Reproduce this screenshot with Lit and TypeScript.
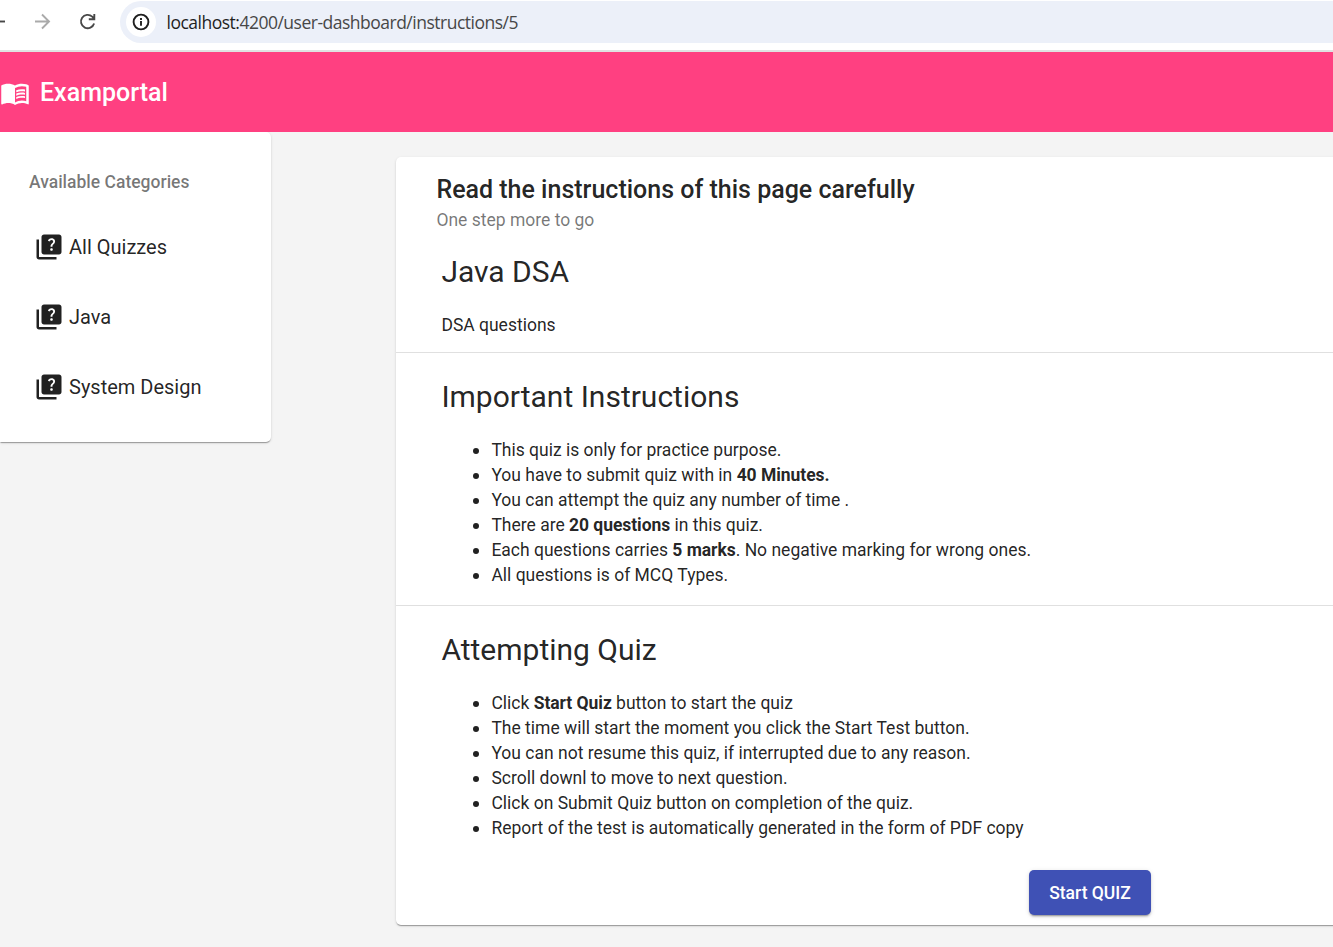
import { LitElement, html, css } from "lit";
import { customElement } from "lit/decorators.js";

const quizIcon = html`<svg class="quiz-icon" viewBox="0 0 24 24" fill="currentColor">
  <path d="M4 6H2v14c0 1.100.9 2 2 2h14v-2H4V6z"></path>
  <path fill-rule="evenodd" d="M20 2H8c-1.100 0-2 .9-2 2v12c0 1.100.9 2 2 2h12c1.100 0 2-.9 2-2V4c0-1.100-.9-2-2-2zm-5.990 13c-.59 0-1.050-.47-1.050-1.050 0-.59.470-1.040 1.050-1.040.59 0 1.040.45 1.040 1.040-.01.580-.45 1.050-1.040 1.050zm2.500-6.170c-.63.930-1.230 1.210-1.560 1.810-.13.240-.18.400-.18 1.180h-1.520c0-.41-.06-1.080.26-1.650.41-.73 1.180-1.160 1.630-1.800.48-.68.210-1.940-1.140-1.940-.88 0-1.320.67-1.500 1.230l-1.370-.57C11.510 5.960 12.520 5 13.990 5c1.230 0 2.080.56 2.510 1.260.37.600.58 1.730.01 2.570z"></path>
</svg>`;

@customElement("browser-bar")
export class BrowserBar extends LitElement {
  static styles = css`
    :host { display: block; }
    .bar { box-sizing: border-box; height: 52px; display: flex; align-items: flex-start; background: #fff; border-bottom: 2px solid #e0e2e2; overflow: hidden; }
    .icons { width: 120px; height: 43px; flex: none; display: block; }
    .pill { margin-top: 1px; flex: 1; height: 42px; border-radius: 21px 0 0 21px; background: #ecf0f9; display: flex; align-items: center; }
    .info { width: 30px; height: 30px; border-radius: 50%; background: #fff; margin-left: 6px; flex: none; }
    .info svg { display: block; }
    .url { margin-left: 10.500px; font: 17.500px/24px "Open Sans", "Noto Sans", sans-serif; letter-spacing: -0.500px; color: #474747; white-space: pre; }
    .host { color: #1f1f1f; }
  `;
  render() {
    return html`<div class="bar">
      <svg class="icons" viewBox="0 0 120 43" fill="none" stroke-width="1.900">
        <path d="M-8 21.500H5" stroke="#474747"></path>
        <path d="M35 21.500H49M42 14.500l7 7-7 7" stroke="#aaa"></path>
        <path d="M94.100 23.500A6.700 6.700 0 1 1 92.200 16.600L94.300 18.800M94.300 14v5.300H88.800" stroke="#474747"></path>
      </svg>
      <div class="pill">
        <div class="info"><svg width="30" height="30" viewBox="0 0 30 30" fill="none" stroke="#1f1f1f" stroke-width="1.900">
          <circle cx="15" cy="15" r="7.400"></circle><path d="M15 14v4.800M15 11v2"></path></svg></div>
        <div class="url"><span class="host">localhost:</span>4200/user-dashboard/instructions/5</div>
      </div>
    </div>`;
  }
}

@customElement("app-header")
export class AppHeader extends LitElement {
  static styles = css`
    :host { display: block; }
    .header { height: 80px; display: flex; align-items: center; background: #ff4081; color: #fff; font: 500 25px/40px Roboto, sans-serif; }
    .book { width: 30px; height: 30px; flex: none; margin-top: 2px; }
    .name { margin: 2px 0 0 10px; }
  `;
  render() {
    return html`<div class="header">
      <svg class="book" viewBox="0 0 24 24" fill="currentColor">
        <path fill-rule="evenodd" d="M21 5c-1.110-.35-2.330-.5-3.500-.5-1.950 0-4.050.4-5.500 1.500-1.450-1.100-3.550-1.500-5.500-1.500S2.450 4.900 1 6v14.650c0 .25.25.5.5.5.1 0 .15-.05.25-.05C3.100 20.450 5.050 20 6.500 20c1.950 0 4.050.4 5.500 1.500 1.350-.85 3.800-1.500 5.500-1.500 1.650 0 3.350.3 4.750 1.050.1.050.15.050.25.050.25 0 .5-.25.5-.5V6c-.6-.45-1.250-.75-2-1zm0 13.500c-1.100-.35-2.300-.5-3.500-.5-1.700 0-4.150.65-5.500 1.500V8c1.350-.85 3.800-1.500 5.500-1.500 1.200 0 2.400.15 3.500.5v11.500z"></path>
        <path d="M17.500 10.500c.88 0 1.730.09 2.500.26V9.240c-.79-.15-1.640-.24-2.500-.24-1.700 0-3.240.29-4.500.83v1.660c1.130-.64 2.700-.99 4.500-.99zM13 12.490v1.660c1.130-.64 2.700-.99 4.500-.99.88 0 1.730.09 2.500.26V11.900c-.79-.15-1.640-.24-2.500-.24-1.700 0-3.240.3-4.500.83zM17.500 14.330c-1.700 0-3.240.29-4.500.83v1.660c1.130-.64 2.700-.99 4.500-.99.88 0 1.730.09 2.500.26v-1.520c-.79-.16-1.640-.24-2.500-.24z"></path>
      </svg>
      <span class="name">Examportal</span>
    </div>`;
  }
}

@customElement("category-list")
export class CategoryList extends LitElement {
  static styles = css`
    :host { display: block; width: 271px; flex: none; }
    .card { box-sizing: border-box; height: 310px; padding-top: 20px; background: #fff; border-radius: 0 5px 5px 0; color: rgba(0,0,0,.87);
      box-shadow: 0 2px 1px -1px rgba(0,0,0,.2), 0 1px 1px rgba(0,0,0,.14), 0 1px 3px rgba(0,0,0,.12); font-family: Roboto, sans-serif; }
    .subheader { height: 60px; line-height: 60px; padding-left: 29px; font-size: 17.500px; font-weight: 500; color: rgba(0,0,0,.54); }
    .item { height: 70px; display: flex; align-items: center; padding-left: 34px; font-size: 20px; }
    .quiz-icon { width: 30px; height: 30px; margin-right: 5px; flex: none; }
  `;
  render() {
    return html`<div class="card">
      <div class="subheader">Available Categories</div>
      ${["All Quizzes", "Java", "System Design"].map((t) => html`<div class="item">${quizIcon}<span>${t}</span></div>`)}
    </div>`;
  }
}

@customElement("quiz-instructions")
export class QuizInstructions extends LitElement {
  static styles = css`
    :host { display: block; flex: none; width: 1388px; margin: 25px 0 0 125px; }
    .card { box-sizing: border-box; height: 768px; background: #fff; border-radius: 5px; color: rgba(0,0,0,.87);
      box-shadow: 0 2px 1px -1px rgba(0,0,0,.2), 0 1px 1px rgba(0,0,0,.14), 0 1px 3px rgba(0,0,0,.12); font: 17.500px/25px Roboto, sans-serif; }
    .head { padding: 13px 40.400px 0; }
    .title { font-size: 25px; line-height: 40px; font-weight: 500; }
    .subtitle { line-height: 22px; margin-top: -1px; color: rgba(0,0,0,.54); }
    .section { padding: 0 45.400px; border-bottom: 1px solid rgba(0,0,0,.12); box-sizing: border-box; }
    .intro { height: 122px; padding-top: 21px; }
    .rules { height: 253px; padding-top: 24px; }
    .attempt { height: auto; padding-top: 24px; border: 0; }
    h1 { margin: 0 0 21px; font-size: 30px; line-height: 40px; font-weight: 400; }
    p { margin: 0; }
    ul { margin: 0; padding-left: 50px; list-style: none; }
    li::before { content: ""; display: inline-block; width: 6px; height: 6px; border-radius: 50%; background: currentColor; margin: 0 12.400px 0 -18.400px; vertical-align: 2px; }
    b { font-weight: 700; letter-spacing: -.05px; }
    .actions { display: flex; justify-content: center; margin-top: 29px; }
    button { width: 122px; height: 45px; border: 0; border-radius: 5px; padding: 1px 0 0; background: #3f51b5; color: #fff; font: 500 17.500px/45px Roboto, sans-serif;
      box-shadow: 0 3px 1px -2px rgba(0,0,0,.2), 0 2px 2px rgba(0,0,0,.14), 0 1px 5px rgba(0,0,0,.12); }
  `;
  render() {
    return html`<div class="card">
      <div class="head"><div class="title">Read the instructions of this page carefully</div><div class="subtitle">One step more to go</div></div>
      <div class="section intro"><h1>Java DSA</h1><p>DSA questions</p></div>
      <div class="section rules"><h1>Important Instructions</h1>
        <ul>
          <li>This quiz is only for practice purpose.</li>
          <li>You have to submit quiz with in <b>40 Minutes.</b></li>
          <li>You can attempt the quiz any number of time .</li>
          <li>There are <b>20 questions</b> in this quiz.</li>
          <li>Each questions carries <b>5 marks</b>. No negative marking for wrong ones.</li>
          <li>All questions is of MCQ Types.</li>
        </ul>
      </div>
      <div class="section attempt"><h1>Attempting Quiz</h1>
        <ul>
          <li>Click <b>Start Quiz</b> button to start the quiz</li>
          <li>The time will start the moment you click the Start Test button.</li>
          <li>You can not resume this quiz, if interrupted due to any reason.</li>
          <li>Scroll downl to move to next question.</li>
          <li>Click on Submit Quiz button on completion of the quiz.</li>
          <li>Report of the test is automatically generated in the form of PDF copy</li>
        </ul>
      </div>
      <div class="actions"><button>Start QUIZ</button></div>
    </div>`;
  }
}

@customElement("app-root")
export class AppRoot extends LitElement {
  static styles = css`
    :host { display: block; height: 947px; overflow: hidden; background: #f4f4f4; }
    .body { display: flex; align-items: flex-start; overflow: hidden; height: 815px; }
  `;
  render() {
    return html`<browser-bar></browser-bar><app-header></app-header>
      <div class="body"><category-list></category-list><quiz-instructions></quiz-instructions></div>`;
  }
}
